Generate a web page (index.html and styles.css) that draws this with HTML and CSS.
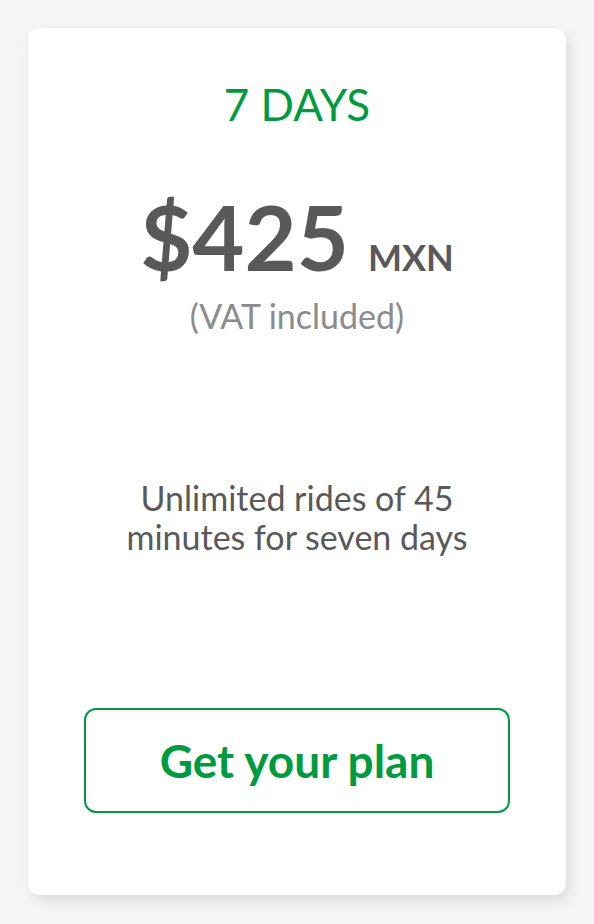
FILE: index.html
```html
<!DOCTYPE html>
<html lang="en">
<head>
    <meta charset="UTF-8">
    <meta name="viewport" content="width=device-width, initial-scale=1.0">
    <title>7 Days Plan</title>
    <link rel="stylesheet" href="styles.css">
</head>
<body>
    <div class="plan-card">
        <h2 class="plan-title">7 DAYS</h2>
        <div class="plan-price">
            <span class="price-amount">$425</span>
            <span class="price-currency">MXN</span>
        </div>
        <div class="price-note">(VAT included)</div>
        <p class="plan-description">Unlimited rides of 45<br>minutes for seven days</p>
        <a href="#" class="plan-button">Get your plan</a>
    </div>
</body>
</html>
```

FILE: styles.css
```css
html {
    background-color: #f5f5f5;
}
body {
    font-family: Lato, 'Open Sans', sans-serif;
    color: #595959;
    margin: 0;
    padding: 28px 28px 29px 28px;
    width: 538px;
}
.plan-card {
    background-color: #fff;
    border-radius: 12px;
    box-shadow: 4px 6px 14px rgba(0, 0, 0, 0.1);
    height: 867px;
    display: flex;
    flex-direction: column;
    align-items: center;
    box-sizing: border-box;
    padding-top: 50px;
}
.plan-title {
    color: #009b3e;
    font-size: 44px;
    font-weight: 400;
    line-height: 52px;
    margin: 0;
}
.plan-price {
    display: flex;
    align-items: baseline;
    margin-top: 61px;
    line-height: 1;
}
.price-amount {
    font-size: 90px;
    font-weight: 700;
}
.price-currency {
    font-size: 36px;
    font-weight: 700;
    margin-left: 19px;
}
.price-note {
    color: #8c8c8c;
    font-size: 34px;
    line-height: 40px;
    margin-top: 15px;
}
.plan-description {
    font-size: 34px;
    line-height: 39px;
    text-align: center;
    margin: 142px 0 0 0;
}
.plan-button {
    margin-top: 152px;
    width: 426px;
    height: 105px;
    box-sizing: border-box;
    border: 2px solid #009b3e;
    border-radius: 12px;
    color: #009b3e;
    font-size: 46px;
    font-weight: 700;
    text-decoration: none;
    display: flex;
    align-items: center;
    justify-content: center;
}
```
